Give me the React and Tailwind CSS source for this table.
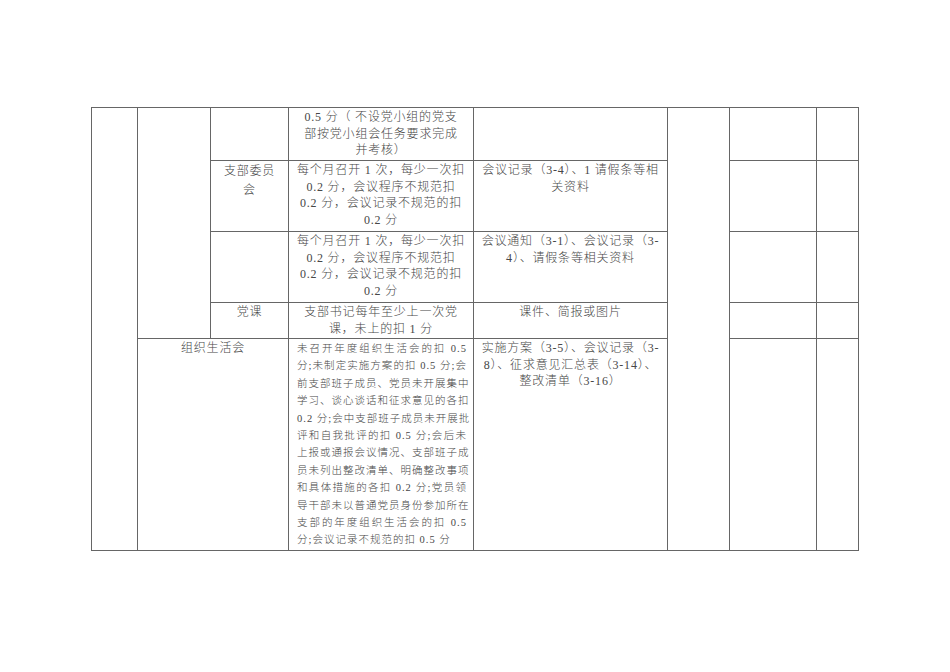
const line = 'border-r border-b border-[#666666]'
const txt = 'text-[12px] leading-[16.7px] tracking-[0.8px] text-[#474747] font-light text-center pt-[1px]'

const rows12 = [
    '未召开年度组织生活会的扣 0.5',
    '分;未制定实施方案的扣 0.5 分;会',
    '前支部班子成员、党员未开展集中',
    '学习、谈心谈话和征求意见的各扣',
    '0.2 分;会中支部班子成员未开展批',
    '评和自我批评的扣 0.5 分;会后未',
    '上报或通报会议情况、支部班子成',
    '员未列出整改清单、明确整改事项',
    '和具体措施的各扣 0.2 分;党员领',
    '导干部未以普通党员身份参加所在',
    '支部的年度组织生活会的扣 0.5',
    '分;会议记录不规范的扣 0.5 分',
]

function Lines({ items }) {
    return items.map((t) => (
        <div key={t} className="whitespace-nowrap">
            {t}
        </div>
    ))
}

export default function App() {
    return (
        <div
            className="min-h-[672px] bg-white pt-[107px] pl-[91px]"
            style={{ fontFamily: '"Liberation Serif", "Noto Sans CJK SC", serif' }}
        >
            <div className="grid w-fit grid-cols-[46px_73px_78px_185px_194px_62px_87px_42px] grid-rows-[53px_71px_71px_36px_212px] border-l border-t border-[#666666]">
                {/* left merged columns */}
                <div className={`${line} col-start-1 row-start-1 row-span-5`} />
                <div className={`${line} col-start-2 row-start-1 row-span-4`} />

                {/* row 1 */}
                <div className={`${line} col-start-3 row-start-1`} />
                <div className={`${line} ${txt} col-start-4 row-start-1`}>
                    <Lines items={['0.5 分（ 不设党小组的党支', '部按党小组会任务要求完成', '并考核）']} />
                </div>
                <div className={`${line} col-start-5 row-start-1`} />

                {/* row 2 */}
                <div className={`${line} ${txt} col-start-3 row-start-2 leading-[18.5px]`}>
                    <Lines items={['支部委员', '会']} />
                </div>
                <div className={`${line} ${txt} col-start-4 row-start-2`}>
                    <Lines
                        items={[
                            '每个月召开 1 次，每少一次扣',
                            '0.2 分，会议程序不规范扣',
                            '0.2 分，会议记录不规范的扣',
                            '0.2 分',
                        ]}
                    />
                </div>
                <div className={`${line} ${txt} col-start-5 row-start-2`}>
                    <Lines items={['会议记录（3-4）、1 请假条等相', '关资料']} />
                </div>

                {/* row 3 */}
                <div className={`${line} col-start-3 row-start-3`} />
                <div className={`${line} ${txt} col-start-4 row-start-3`}>
                    <Lines
                        items={[
                            '每个月召开 1 次，每少一次扣',
                            '0.2 分，会议程序不规范扣',
                            '0.2 分，会议记录不规范的扣',
                            '0.2 分 ',
                        ]}
                    />
                </div>
                <div className={`${line} ${txt} col-start-5 row-start-3`}>
                    <Lines items={['会议通知（3-1）、会议记录（3-', '4）、请假条等相关资料']} />
                </div>

                {/* row 4 */}
                <div className={`${line} ${txt} col-start-3 row-start-4`}>党课</div>
                <div className={`${line} ${txt} col-start-4 row-start-4`}>
                    <Lines items={['支部书记每年至少上一次党', '课，未上的扣 1 分']} />
                </div>
                <div className={`${line} ${txt} col-start-5 row-start-4`}>课件、简报或图片</div>

                {/* row 5 */}
                <div className={`${line} ${txt} col-span-2 col-start-2 row-start-5`}>组织生活会</div>
                <div className={`${line} col-start-4 row-start-5 pl-[8px] pr-[6px] pt-[1px] text-[10.5px] font-light leading-[17.4px] tracking-[1px] text-[#474747]`}>
                    {rows12.map((t, i) => (
                        <div
                            key={t}
                            className={
                                i < rows12.length - 1
                                    ? 'whitespace-nowrap text-justify [text-align-last:justify]'
                                    : 'whitespace-nowrap'
                            }
                        >
                            {t}
                        </div>
                    ))}
                </div>
                <div className={`${line} ${txt} col-start-5 row-start-5`}>
                    <Lines items={['实施方案（3-5）、会议记录（3-', '8）、征求意见汇总表（3-14）、', '整改清单（3-16）']} />
                </div>

                {/* scoring column spans all rows */}
                <div className={`${line} col-start-6 row-start-1 row-span-5`} />

                {/* right two columns */}
                {[1, 2, 3, 4, 5].map((r) => (
                    <div key={`a${r}`} className={`${line} col-start-7`} style={{ gridRowStart: r }} />
                ))}
                {[1, 2, 3, 4, 5].map((r) => (
                    <div key={`b${r}`} className={`${line} col-start-8`} style={{ gridRowStart: r }} />
                ))}
            </div>
        </div>
    )
}
